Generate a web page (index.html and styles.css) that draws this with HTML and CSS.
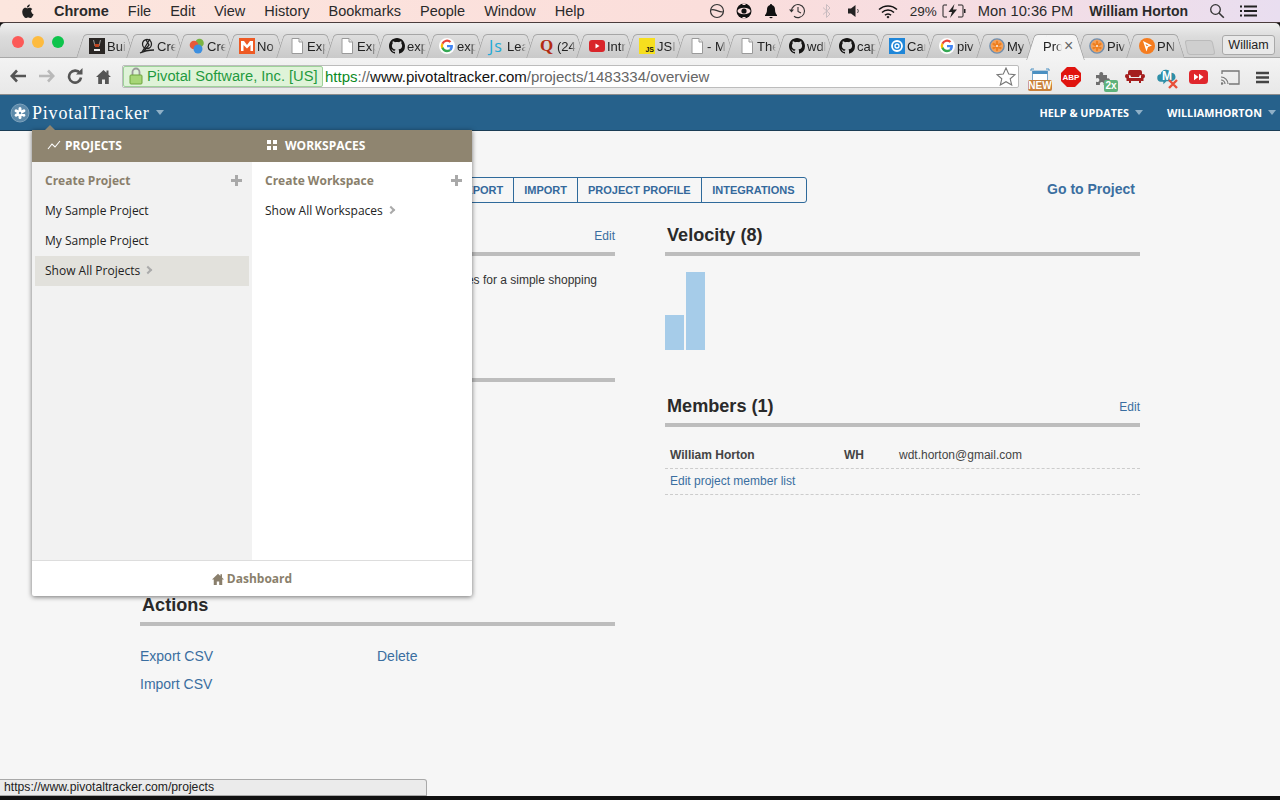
FILE: index.html
```html
<!DOCTYPE html>
<html lang="en">
<head>
<meta charset="utf-8">
<title>Pivotal Tracker</title>
<link rel="stylesheet" href="styles.css">
</head>
<body>
<svg class="defs" width="0" height="0">
  <symbol id="doc" viewBox="0 0 14 16"><path d="M2 .5h7l3.5 3.5v11.500h-10.500z" fill="#fff" stroke="#9a9a9a"/><path d="M9 .5v3.500h3.500" fill="#e8e8e8" stroke="#9a9a9a"/></symbol>
  <symbol id="gh" viewBox="0 0 16 16"><path fill="#161514" d="M8 0C3.580 0 0 3.580 0 8c0 3.540 2.290 6.530 5.470 7.590.4.070.55-.17.55-.38v-1.340c-2.230.48-2.700-1.080-2.700-1.080-.36-.92-.89-1.170-.89-1.170-.73-.5.050-.49.050-.49.800.06 1.230.83 1.230.83.710 1.220 1.870.87 2.330.66.070-.52.280-.87.510-1.070-1.780-.2-3.640-.89-3.640-3.950 0-.87.310-1.590.820-2.150-.08-.2-.36-1.020.08-2.120 0 0 .67-.21 2.200.82.640-.18 1.320-.27 2-.27s1.360.09 2 .27c1.530-1.040 2.200-.82 2.200-.82.440 1.100.16 1.920.08 2.120.51.560.82 1.270.82 2.150 0 3.070-1.870 3.750-3.650 3.950.290.25.540.73.540 1.480v2.200c0 .21.150.46.550.38A8.010 8.010 0 0 0 16 8c0-4.420-3.580-8-8-8z"/></symbol>
  <symbol id="google" viewBox="0 0 18 18"><circle cx="9" cy="9" r="9" fill="#fff"/><path fill="#ea4335" d="M9 4.200c1.200 0 2.200.4 3 1.150l1.800-1.800A7 7 0 0 0 2.800 5.700l2.100 1.600C5.500 5.500 7.100 4.200 9 4.200z"/><path fill="#4285f4" d="M15.700 9.200c0-.5-.05-1-.13-1.400H9v2.700h3.750c-.17.9-.66 1.650-1.420 2.150l2.200 1.700c1.300-1.200 2.170-3 2.170-5.150z"/><path fill="#fbbc05" d="M4.900 10.700a4.200 4.200 0 0 1 0-3.400L2.800 5.700a7 7 0 0 0 0 6.600z"/><path fill="#34a853" d="M9 16c1.900 0 3.500-.62 4.530-1.650l-2.200-1.700c-.6.400-1.400.65-2.330.65-1.900 0-3.500-1.300-4.100-3.100l-2.100 1.600A7 7 0 0 0 9 16z"/></symbol>
  <symbol id="pivotal" viewBox="0 0 18 18"><circle cx="9" cy="9" r="8" fill="#f3a25c" stroke="#6f8fb0" stroke-width="1.600"/><g stroke="#ee7f1f" stroke-width="2.600" stroke-linecap="round"><path d="M9 4.500v9M5.100 6.750l7.800 4.500M5.100 11.250l7.800-4.500"/></g><circle cx="9" cy="9" r="1" fill="#fff"/></symbol>
</svg>

<header class="menubar">
  <svg class="apple" width="14" height="16" viewBox="0 0 14 16"><path fill="#222" d="M10.900 8.500c0-1.600 1.300-2.400 1.400-2.500-.8-1.100-2-1.300-2.400-1.300-1-.1-2 .6-2.500.6s-1.300-.6-2.200-.6C4.500 4.700 3.400 5.400 2.800 6.400 1.600 8.500 2.500 11.600 3.700 13.300c.6.800 1.300 1.800 2.200 1.700.9 0 1.200-.6 2.300-.6s1.400.6 2.300.6c1 0 1.600-.9 2.100-1.700.7-1 1-1.900 1-2-.1 0-2.200-.8-2.200-2.800zM9.100 3.600c.5-.6.800-1.400.7-2.200-.7 0-1.600.5-2.100 1.100-.5.500-.9 1.400-.8 2.100.8.100 1.700-.4 2.200-1z"/></svg>
  <nav class="menus">
    <span class="menu-app">Chrome</span><span>File</span><span>Edit</span><span>View</span><span>History</span><span>Bookmarks</span><span>People</span><span>Window</span><span>Help</span>
  </nav>
  <div class="tray">
    <svg class="tray-a" width="16" height="16" viewBox="0 0 16 16"><circle cx="8" cy="8" r="6.500" fill="none" stroke="#333" stroke-width="1.200"/><path d="M2 7c3-2 6 2 12 2" fill="none" stroke="#333" stroke-width="1.200"/></svg>
    <svg class="tray-b" width="18" height="16" viewBox="0 0 18 16"><circle cx="9" cy="8" r="7.500" fill="#111"/><ellipse cx="9" cy="8" rx="6.500" ry="3.200" fill="#fbdede"/><circle cx="9" cy="8" r="2.600" fill="#111"/><path d="M7.500 .5h3v1.500h-3zM7.500 14h3v1.500h-3z" fill="#fbdede"/></svg>
    <svg class="tray-c" width="14" height="16" viewBox="0 0 14 16"><path d="M7 1c-.7 0-1 .5-1 1C3.800 2.600 3 4.400 3 6.500c0 3-1 4.500-2 5.500v1h12v-1c-1-1-2-2.500-2-5.500C11 4.400 10.200 2.600 8 2c0-.5-.3-1-1-1zM5.300 14a1.800 1.800 0 0 0 3.400 0z" fill="#111"/></svg>
    <svg class="tray-d" width="18" height="16" viewBox="0 0 18 16"><path d="M3.500 8A6.500 6.500 0 1 1 6 13.200" fill="none" stroke="#333" stroke-width="1.100"/><path d="M1 6.500l2.500 3 2.500-3z" fill="#333"/><path d="M10 4v4.500l3 1.500" fill="none" stroke="#333" stroke-width="1.100"/></svg>
    <svg class="tray-e" width="10" height="16" viewBox="0 0 10 16"><path d="M1 4.500l7 6.500-3.500 3.500V1.500L8 5 1 11.500" fill="none" stroke="#c9bcc0" stroke-width="1"/></svg>
    <svg class="tray-f" width="14" height="14" viewBox="0 0 14 14"><path d="M1 4.500h3L8.500 1v12L4 9.500H1z" fill="#222"/><path d="M10.500 5a3 3 0 0 1 0 4" fill="none" stroke="#555"/></svg>
    <svg class="tray-g" width="20" height="15" viewBox="0 0 20 15"><g fill="none" stroke="#111" stroke-width="1.500"><path d="M1 5.500a13 13 0 0 1 18 0"/><path d="M4 8.500a8.500 8.500 0 0 1 12 0"/><path d="M7 11.300a4 4 0 0 1 6 0"/></g><path d="M8.500 13l1.500-1.200L11.500 13 10 14.500z" fill="#111"/></svg>
    <span class="tray-pct">29%</span>
    <svg class="tray-h" width="24" height="14" viewBox="0 0 24 14"><path d="M5 1H2a1 1 0 0 0-1 1v10a1 1 0 0 0 1 1h3M16 1h4a1 1 0 0 1 1 1v10a1 1 0 0 1-1 1h-4" fill="none" stroke="#222"/><rect x="22" y="5" width="1.500" height="4" fill="#222"/><path d="M12.500 0L6.500 8h3.500L8 14l7-8.500h-4z" fill="#222"/></svg>
    <span class="tray-time">Mon 10:36 PM</span>
    <span class="tray-user">William Horton</span>
    <svg class="tray-i" width="16" height="16" viewBox="0 0 16 16"><circle cx="6.500" cy="6.500" r="4.800" fill="none" stroke="#333" stroke-width="1.300"/><path d="M10 10l4.800 4.800" stroke="#333" stroke-width="1.600"/></svg>
    <svg class="tray-j" width="18" height="12" viewBox="0 0 18 12"><path d="M5 1.500h13M5 6h13M5 10.500h13M1 1.500h2M1 6h2M1 10.500h2" stroke="#222" stroke-width="1.800"/></svg>
  </div>
</header>

<section class="tabstrip">
  <div class="lights"><i class="light red"></i><i class="light amber"></i><i class="light green"></i></div>
  <div class="tabs">
    <div class="tab"><svg class="fav" width="16" height="16" viewBox="0 0 16 16"><rect width="16" height="16" fill="#2a2624"/><path d="M4.500 2l1.500 6h4l1.500-6" fill="none" stroke="#999"/><path d="M5.500 6h5l-.5 3h-4z" fill="#c0441d"/><path d="M5 11h6v2H5z" fill="#eee"/></svg><span class="label">Bui</span></div>
    <div class="tab"><svg class="fav" width="16" height="16" viewBox="0 0 16 16"><g fill="none" stroke="#222" stroke-width="1.300"><circle cx="8" cy="6" r="4.500"/><path d="M11 1L3 14M7 2l3 5-5 6M1 15c4-2 9-3 14-3"/></g></svg><span class="label">Cre</span></div>
    <div class="tab"><svg class="fav" width="16" height="16" viewBox="0 0 16 16"><circle cx="10.500" cy="5" r="4.300" fill="#7cb342"/><circle cx="5" cy="7" r="4.300" fill="#e8593a"/><circle cx="9" cy="11" r="4.500" fill="#3c8fe0"/></svg><span class="label">Cre</span></div>
    <div class="tab"><svg class="fav" width="16" height="16" viewBox="0 0 16 16"><rect width="16" height="16" fill="#ee5a24"/><path d="M2 3h3l3 4 3-4h3v10h-2.500V7L8 10.500 4.500 7v6H2z" fill="#fff"/></svg><span class="label">No</span></div>
    <div class="tab"><svg class="fav fav-doc" width="14" height="16"><use href="#doc"/></svg><span class="label">Exp</span></div>
    <div class="tab"><svg class="fav fav-doc" width="14" height="16"><use href="#doc"/></svg><span class="label">Exp</span></div>
    <div class="tab"><svg class="fav" width="16" height="16"><use href="#gh"/></svg><span class="label">exp</span></div>
    <div class="tab"><svg class="fav" width="16" height="16"><use href="#google"/></svg><span class="label">exp</span></div>
    <div class="tab"><span class="fav-js">Js</span><span class="label">Lea</span></div>
    <div class="tab"><span class="fav-q">Q</span><span class="label">(24</span></div>
    <div class="tab"><svg class="fav" width="16" height="16" viewBox="0 0 16 16"><rect y="2" width="16" height="12" rx="3" fill="#d9252a"/><path d="M6.500 5.500v5l4-2.500z" fill="#fff"/></svg><span class="label">Intr</span></div>
    <div class="tab"><span class="fav-yellow">JS</span><span class="label">JSI</span></div>
    <div class="tab"><svg class="fav fav-doc" width="14" height="16"><use href="#doc"/></svg><span class="label">- M</span></div>
    <div class="tab"><svg class="fav fav-doc" width="14" height="16"><use href="#doc"/></svg><span class="label">The</span></div>
    <div class="tab"><svg class="fav" width="16" height="16"><use href="#gh"/></svg><span class="label">wdl</span></div>
    <div class="tab"><svg class="fav" width="16" height="16"><use href="#gh"/></svg><span class="label">cap</span></div>
    <div class="tab"><svg class="fav" width="16" height="16" viewBox="0 0 16 16"><rect width="16" height="16" fill="#1f86d8"/><circle cx="8" cy="8" r="5" fill="none" stroke="#fff" stroke-width="1.800"/><circle cx="8" cy="8" r="2" fill="none" stroke="#fff" stroke-width="1.300"/></svg><span class="label">Car</span></div>
    <div class="tab"><svg class="fav" width="16" height="16"><use href="#google"/></svg><span class="label">piv</span></div>
    <div class="tab"><svg class="fav" width="16" height="16"><use href="#pivotal"/></svg><span class="label">My</span></div>
    <div class="tab tab-active"><span class="label">Pro</span><span class="tab-close">×</span></div>
    <div class="tab"><svg class="fav" width="16" height="16"><use href="#pivotal"/></svg><span class="label">Piv</span></div>
    <div class="tab"><svg class="fav" width="16" height="16" viewBox="0 0 16 16"><circle cx="8" cy="8" r="8" fill="#f57c1f"/><path d="M4 3l9 4.500-4 1.500-1.500 4.500z" fill="#fff"/><path d="M6.500 6l3 1.500-2 .7z" fill="#f57c1f"/></svg><span class="label">PN</span></div>
    <div class="new-tab"></div>
  </div>
  <div class="profile">William</div>
</section>

<section class="toolbar">
  <svg class="tb back" width="16" height="14" viewBox="0 0 16 14"><path d="M7 1.500L1.800 7 7 12.500M2 7h14" fill="none" stroke="#555" stroke-width="2.600"/></svg>
  <svg class="tb forward" width="16" height="14" viewBox="0 0 16 14"><path d="M9 1.500L14.200 7 9 12.500M14 7H0" fill="none" stroke="#b9b9b9" stroke-width="2.600"/></svg>
  <svg class="tb reload" width="16" height="16" viewBox="0 0 16 16"><path d="M13 5.200A6 6 0 1 0 14 9.500" fill="none" stroke="#555" stroke-width="2.600"/><path d="M9 6.500h6.500V0z" fill="#555"/></svg>
  <svg class="tb home" width="15" height="15" viewBox="0 0 15 15"><path d="M7.500 1L0 8h2.200v7h3.800v-4.500h3V15h3.800V8H15l-2.500-2.300V1.500h-2v2.300z" fill="#555"/></svg>
  <div class="omnibox">
    <div class="secure">
      <svg width="14" height="18" viewBox="0 0 14 18"><path d="M3.500 8V5a3.500 3.500 0 0 1 7 0v3" fill="none" stroke="#9a9a9a" stroke-width="1.800"/><rect x="1" y="8" width="12" height="9" rx="1" fill="#a6d676" stroke="#6fa53f"/></svg>
      <span>Pivotal Software, Inc. [US]</span>
    </div>
    <div class="url"><span class="u-https">https</span><span class="u-dim">://</span><span class="u-host">www.pivotaltracker.com</span><span class="u-dim">/projects/1483334/overview</span></div>
    <svg class="star" width="20" height="19" viewBox="0 0 20 19"><path d="M10 1l2.700 6 6.300.6-4.800 4.200 1.500 6.200L10 14.700 4.300 18l1.500-6.200L1 7.600 7.300 7z" fill="#fff" stroke="#777" stroke-width="1.100"/></svg>
  </div>
  <div class="exts">
    <div class="ext ext-new"><svg width="20" height="14" viewBox="0 0 20 14"><path d="M1 3V1h3M16 1h3v2" fill="none" stroke="#4a90c2"/><rect x="2.500" y="3" width="15" height="10" fill="#fff" stroke="#7aa7c9"/><rect x="2.500" y="3" width="15" height="3" fill="#4a90c2"/></svg><b class="new-badge">NEW</b></div>
    <div class="ext ext-abp"><span>ABP</span></div>
    <div class="ext ext-puzzle"><svg width="15" height="15" viewBox="0 0 15 15"><path d="M1 4h3.500a2 2 0 1 1 3.500 0H12v3.500a2 2 0 1 1 0 3.500V14H8.500a2 2 0 1 0-3.500 0H1v-3.500a2 2 0 1 0 0-3z" fill="#6e6e6e"/></svg><b class="badge-2x">2x</b></div>
    <div class="ext ext-couch"><svg width="20" height="15" viewBox="0 0 20 15"><path d="M5 1h10a2 2 0 0 1 2 2v3h-1a2 2 0 0 0-2 2H6a2 2 0 0 0-2-2H3V3a2 2 0 0 1 2-2z" fill="#a51f1f"/><path d="M0 7a2 2 0 0 1 4 0v2h12V7a2 2 0 0 1 4 0c0 1.500-1 2-1.500 2.500V12H16v2h-2v-2H6v2H4v-2H1.500V9.500C1 9 0 8.500 0 7z" fill="#a51f1f"/></svg></div>
    <div class="ext ext-cloud"><svg width="19" height="19" viewBox="0 0 18 18"><path d="M4 13a3.500 3.500 0 0 1-.5-7A5 5 0 0 1 13 4.500a4 4 0 0 1 1 8H9l-3 3v-2.500z" fill="#2f8fa8"/></svg><b class="cloud-m">M</b><svg class="cloud-x" width="10" height="10" viewBox="0 0 10 10"><path d="M1 1l8 8M9 1l-8 8" stroke="#e8503a" stroke-width="2.400"/></svg></div>
    <div class="ext ext-ff"><svg width="19" height="14" viewBox="0 0 19 14"><rect width="19" height="14" rx="3.500" fill="#e0262c"/><path d="M5 3.800v6.400L9.500 7zM10 3.800v6.400L14.500 7z" fill="#fff"/></svg></div>
    <div class="ext ext-cast"><svg width="19" height="15" viewBox="0 0 19 15"><path d="M1 4V1h17v13H8" fill="none" stroke="#777" stroke-width="1.300"/><path d="M0 7a7 7 0 0 1 7 7M0 10a4 4 0 0 1 4 4" fill="none" stroke="#777" stroke-width="1.200"/><circle cx="1" cy="13.500" r="1.300" fill="#777"/></svg></div>
    <div class="ext ext-menu"><svg width="13" height="13" viewBox="0 0 13 13"><path d="M0 2h13M0 6.500h13M0 11h13" stroke="#444" stroke-width="2.400"/></svg></div>
  </div>
</section>

<header class="appnav">
  <div class="brand">
    <svg width="20" height="20" viewBox="0 0 20 20"><circle cx="10" cy="10" r="9" fill="#5d8aaa" stroke="#7ea3bd"/><g stroke="#fff" stroke-width="3" stroke-linecap="round"><path d="M10 5.500v9M6.100 7.750l7.800 4.500M6.100 12.250l7.800-4.500"/></g><circle cx="10" cy="10" r="1.200" fill="#5d8aaa"/></svg>
    <span class="brand-name">PivotalTracker</span>
    <i class="caret"></i>
  </div>
  <div class="appnav-right">
    <span class="nav-item">HELP &amp; UPDATES<i class="caret"></i></span>
    <span class="nav-item">WILLIAMHORTON<i class="caret"></i></span>
  </div>
</header>

<main class="page">
  <div class="subnav">
    <div class="segments">
      <a class="segment">EXPORT</a><a class="segment">IMPORT</a><a class="segment">PROJECT PROFILE</a><a class="segment segment-last">INTEGRATIONS</a>
    </div>
    <a class="go">Go to Project</a>
  </div>
  <div class="columns">
    <div class="col">
      <div class="head"><h2>Description</h2><a class="edit">Edit</a></div>
      <div class="desc"><p>This is a sample project that contains sample stories for a simple shopping</p></div>
      <div class="head"><h2>Activity</h2></div>
      <div class="activity"></div>
      <div class="head"><h2>Actions</h2></div>
      <div class="actions"><a>Export CSV</a><a>Delete</a><a>Import CSV</a></div>
    </div>
    <div class="col">
      <div class="head"><h2>Velocity (8)</h2></div>
      <div class="chart"><i class="bar bar-low"></i><i class="bar bar-high"></i></div>
      <div class="head head-members"><h2>Members (1)</h2><a class="edit">Edit</a></div>
      <div class="member-row"><b class="m-name">William Horton</b><b class="m-init">WH</b><span class="m-mail">wdt.horton@gmail.com</span></div>
      <div class="member-link"><a>Edit project member list</a></div>
    </div>
  </div>
</main>

<aside class="dropdown">
  <i class="dropdown-arrow"></i>
  <div class="dd-head">
    <div class="dd-title"><svg width="14" height="10" viewBox="0 0 14 10"><path d="M1 9l4-5 3 3 5-6" fill="none" stroke="#fff" stroke-width="1.100"/></svg><span>PROJECTS</span></div>
    <div class="dd-title dd-title-w"><svg width="10" height="10" viewBox="0 0 10 10"><path d="M0 0h4v4H0zM6 0h4v4H6zM0 6h4v4H0zM6 6h4v4H6z" fill="#fff"/></svg><span>WORKSPACES</span></div>
  </div>
  <div class="dd-body">
    <div class="dd-col dd-col-left">
      <div class="dd-create"><span>Create Project</span><i class="plus"></i></div>
      <div class="dd-item">My Sample Project</div>
      <div class="dd-item">My Sample Project</div>
      <div class="dd-item dd-hover">Show All Projects<i class="chev"></i></div>
    </div>
    <div class="dd-col">
      <div class="dd-create"><span>Create Workspace</span><i class="plus"></i></div>
      <div class="dd-item">Show All Workspaces<i class="chev"></i></div>
    </div>
  </div>
  <div class="dd-foot"><svg width="12" height="12" viewBox="0 0 15 15"><path d="M7.500 1L0 8h2.200v7h3.800v-4.500h3V15h3.800V8H15l-2.500-2.300V1.500h-2v2.300z" fill="#8a7f6c"/></svg><span>Dashboard</span></div>
</aside>

<div class="status">https://www.pivotaltracker.com/projects</div>
</body>
</html>
```
FILE: styles.css
```css
* { box-sizing: border-box; }
html, body { margin: 0; padding: 0; }
body { position: relative; width: 1280px; height: 800px; overflow: hidden; background: #111; font-family: "Liberation Sans", Arial, sans-serif; color: #222; }
a { color: #3a6ea0; }
.defs { position: absolute; }

/* mac menu bar */
.menubar { height: 23px; display: flex; align-items: center; border-bottom: 1px solid #4a3c3c; background: linear-gradient(to right, #fce6de 0%, #fbdedb 55%, #f6dde2 75%, #e9def0 100%); font-size: 14.500px; color: #2a2a2a; }
.apple { margin-left: 20px; flex: none; }
.menus { display: flex; margin-left: 20px; gap: 19px; }
.menu-app { font-weight: bold; }
.tray { margin-left: auto; display: flex; align-items: center; padding-right: 23px; }
.tray-a { margin-right: 10px; }
.tray-b { margin-right: 11px; }
.tray-c { margin-right: 10px; }
.tray-d { margin-right: 16px; }
.tray-e { margin-right: 15px; }
.tray-f { margin-right: 17px; }
.tray-g { margin-right: 12px; }
.tray-pct { font-size: 13.500px; margin-right: 5px; }
.tray-h { margin-right: 12px; }
.tray-time { font-size: 14.700px; margin-right: 16px; }
.tray-user { font-size: 14px; font-weight: bold; margin-right: 21px; }
.tray-i { margin-right: 14px; }

/* tab strip */
.tabstrip { position: relative; height: 35px; display: flex; background: linear-gradient(#efefef, #dcdcdc 40%, #d0d0d0); border-bottom: 1px solid #a8a8a8; border-radius: 5px 5px 0 0; }
.lights { display: flex; gap: 8px; margin: 13px 0 0 12px; width: 64px; }
.light { width: 12px; height: 12px; border-radius: 50%; }
.red { background: #fc5a58; }
.amber { background: #fdbb3f; }
.green { background: #0ec44c; }
.tabs { display: flex; height: 24px; margin-top: 11px; }
.tab { position: relative; width: 50px; height: 24px; display: flex; align-items: center; padding-left: 13px; font-size: 13px; color: #222; z-index: 0; }
.tab::before, .tab::after { content: ""; position: absolute; top: 0; bottom: 0; width: 30px; background: linear-gradient(#dedede, #c9c9c9); border-top: 1px solid #a6a6a6; z-index: -1; }
.tab::before { left: 0; border-left: 1px solid #a6a6a6; border-radius: 4px 0 0 0; transform-origin: bottom left; transform: skewX(-18deg); }
.tab::after { left: 28px; border-right: 1px solid #a6a6a6; border-radius: 0 4px 0 0; transform-origin: bottom right; transform: skewX(18deg); }
.fav { flex: none; margin-right: 2px; }
.fav-doc { margin-left: 1px; margin-right: 3px; }
.fav-js { width: 18px; flex: none; font: 16px/16px "Open Sans", sans-serif; color: #21a9d6; letter-spacing: 1px; }
.fav-q { width: 18px; flex: none; font: bold 17px/16px "Liberation Serif", serif; color: #b32b12; padding-left: 1px; }
.fav-yellow { width: 16px; height: 16px; flex: none; margin-right: 2px; background: #f7df1e; color: #111; font: bold 7px/8px "Liberation Sans", sans-serif; text-align: right; padding: 8px 1px 0 0; }
.label { display: block; width: 19px; flex: none; overflow: hidden; white-space: nowrap; -webkit-mask-image: linear-gradient(to right, #000 70%, transparent); mask-image: linear-gradient(to right, #000 70%, transparent); }
.tab-active { z-index: 5; padding-left: 17px; }
.tab-active::before, .tab-active::after { background: linear-gradient(#f5f5f5, #f2f2f2); height: 25px; }
.tab-close { margin-left: 2px; font-size: 16px; line-height: 16px; color: #666; }
.new-tab { width: 28px; height: 15px; margin: 6px 0 0 10px; background: #cfcfcf; border: 1px solid #bbb; border-radius: 3px; transform: skewX(12deg); }
.profile { position: absolute; left: 1222px; top: 12px; width: 53px; height: 20px; border: 1px solid #a9a9a9; border-radius: 3px; background: #e9e9e9; font-size: 12.500px; line-height: 18px; text-align: center; color: #222; }

/* toolbar */
.toolbar { height: 37px; display: flex; align-items: center; background: linear-gradient(#f3f3f3, #e8e8e8); border-bottom: 1px solid #8c8c8c; }
.tb { flex: none; }
.back { margin-left: 10px; }
.forward { margin-left: 13px; }
.reload { margin-left: 12px; }
.home { margin-left: 13px; }
.omnibox { width: 897px; height: 23px; margin-left: 11px; display: flex; align-items: center; background: #fff; border: 1px solid #bcbcbc; border-radius: 2px; font-size: 15px; white-space: nowrap; position: relative; }
.secure { width: 200px; height: 21px; display: flex; align-items: center; gap: 4px; padding-left: 5px; background: #dff3d8; border: 1px solid #9ed29a; border-radius: 2px; color: #1f9a3f; flex: none; font-size: 14.700px; }
.url { margin-left: 2px; }
.u-https { color: #0b8a1f; }
.u-dim { color: #666; }
.u-host { color: #111; }
.star { position: absolute; right: 2px; top: 1px; }
.exts { display: flex; align-items: center; height: 100%; position: relative; flex: 1; }
.ext { position: absolute; display: flex; align-items: center; justify-content: center; }
.ext-new { left: 9px; top: 10px; width: 24px; height: 24px; flex-direction: column; justify-content: flex-start; }
.new-badge { margin-top: -2px; width: 24px; height: 11px; background: #c9803a; color: #fff; font-size: 10px; line-height: 11px; text-align: center; border-radius: 2px; }
.ext-abp { left: 42px; top: 9px; width: 20px; height: 20px; background: #e0140f; clip-path: polygon(30% 0, 70% 0, 100% 30%, 100% 70%, 70% 100%, 30% 100%, 0 70%, 0 30%); color: #fff; font-size: 8px; font-weight: bold; }
.ext-puzzle { left: 76px; top: 13px; width: 24px; height: 22px; justify-content: flex-start; align-items: flex-start; }
.badge-2x { position: absolute; left: 9px; top: 9px; width: 14px; height: 12px; background: #5fb27c; border-radius: 2px; color: #fff; font-size: 10px; line-height: 12px; text-align: center; }
.ext-couch { left: 106px; top: 11px; }
.ext-cloud { left: 138px; top: 10px; }
.cloud-m { position: absolute; left: 5px; top: 1px; color: #fff; font-size: 12px; }
.cloud-x { position: absolute; left: 11px; top: 11px; }
.ext-ff { left: 170px; top: 12px; }
.ext-cast { left: 202px; top: 12px; }
.ext-menu { left: 237px; top: 13px; }

/* app nav */
.appnav { height: 36px; display: flex; align-items: center; justify-content: space-between; background: #26618b; border-bottom: 1px solid #1b3d55; color: #fff; }
.brand { display: flex; align-items: center; padding-left: 10px; }
.brand-name { font: 18px/1 "Liberation Serif", serif; margin-left: 2px; letter-spacing: .8px; }
.caret { display: inline-block; width: 0; height: 0; margin-left: 6px; border-left: 4px solid transparent; border-right: 4px solid transparent; border-top: 5px solid #8fb0c7; }
.appnav-right { display: flex; gap: 24px; padding-right: 4px; font: bold 10.800px "Open Sans", sans-serif; }
.nav-item { display: flex; align-items: center; }

/* page */
.page { height: 665px; padding: 46px 0 0 140px; background: #f6f6f6; }
.subnav { display: flex; width: 995px; align-items: center; height: 26px; }
.segments { width: 667px; display: flex; justify-content: flex-end; border: 1px solid #2f6a9b; border-radius: 3px; height: 26px; flex: none; }
.segment { display: flex; align-items: center; padding: 0 10px; border-left: 1px solid #2f6a9b; font-size: 11px; font-weight: bold; color: #34699c; }
.segment:first-child { border-left: 0; }
.segment-last { padding: 0 11.500px 0 10.500px; }
.go { margin-left: auto; padding-bottom: 2px; font-size: 14px; font-weight: bold; color: #3a6ea0; }
.columns { display: flex; gap: 50px; margin-top: 21px; }
.col { width: 475px; }
.head { height: 32px; padding: 0 0 6px 2px; display: flex; align-items: center; justify-content: space-between; border-bottom: 4px solid #bdbdbd; }
.head h2 { margin: 0; font-size: 18.100px; font-weight: bold; color: #2a2a2a; }
.edit { padding-top: 2px; font-size: 12px; }
.desc { height: 94px; padding: 17px 18px 0 0; font-size: 12px; color: #333; }
.desc p { margin: 0; text-align: right; white-space: nowrap; }
.activity { height: 212px; }
.actions { display: grid; grid-template-columns: 237px 1fr; margin-top: 16px; font-size: 14px; line-height: 28px; }
.chart { display: flex; align-items: flex-end; gap: 2px; height: 78px; margin-top: 16px; }
.bar { width: 19px; background: #a6cce9; }
.bar-low { height: 35px; }
.bar-high { height: 78px; }
.head-members { margin-top: 45px; }
.member-row { display: flex; height: 42px; padding: 15px 0 0 5px; border-bottom: 1px dashed #ccc; font-size: 12px; line-height: 27px; color: #444; align-items: center; }
.m-name { width: 174px; }
.m-init { width: 55px; }
.member-link { height: 26px; padding-left: 5px; border-bottom: 1px dashed #ccc; font-size: 12px; line-height: 25px; }

/* dropdown */
.dropdown { position: absolute; left: 32px; top: 130px; width: 440px; height: 466px; display: flex; flex-direction: column; background: #fff; box-shadow: 0 1px 5px rgba(0,0,0,.55); border-radius: 0 0 2px 2px; font: 12px "Open Sans", sans-serif; color: #222; }
.dropdown-arrow { position: absolute; left: 13px; top: -5px; width: 0; height: 0; border-left: 5px solid transparent; border-right: 5px solid transparent; border-bottom: 5px solid #8f8570; }
.dd-head { display: flex; height: 32px; background: #8f8570; color: #fff; font-weight: bold; }
.dd-title { width: 220px; display: flex; align-items: center; gap: 4px; padding: 0 0 2px 15px; }
.dd-title-w { gap: 8px; padding-left: 15px; }
.dd-body { flex: 1; display: flex; }
.dd-col { width: 220px; }
.dd-col-left { background: #f2f2f2; }
.dd-create { display: flex; justify-content: space-between; align-items: center; height: 34px; padding: 2px 10px 0 13px; font-weight: bold; color: #8a7f6c; }
.dd-item { display: flex; align-items: center; width: 214px; height: 30px; margin-left: 3px; padding: 0 0 2px 10px; }
.dd-hover { background: #e2e1dc; }
.plus { position: relative; width: 11px; height: 11px; background: linear-gradient(#a9a9a9, #a9a9a9) center/3px 11px no-repeat, linear-gradient(#a9a9a9, #a9a9a9) center/11px 3px no-repeat; }
.chev { width: 6px; height: 6px; margin-left: 5px; border-top: 2px solid #aaa; border-right: 2px solid #aaa; transform: rotate(45deg); }
.dd-foot { height: 36px; display: flex; align-items: center; justify-content: center; gap: 3px; border-top: 1px solid #ddd; font-weight: bold; color: #8a7f6c; }

/* status bubble */
.status { position: absolute; left: 0; top: 779px; width: 427px; height: 17px; padding-left: 4px; background: #ebebeb; border: 1px solid #a9a9a9; border-left: 0; border-radius: 0 3px 0 0; font-size: 12.200px; line-height: 15px; color: #222; }
```
